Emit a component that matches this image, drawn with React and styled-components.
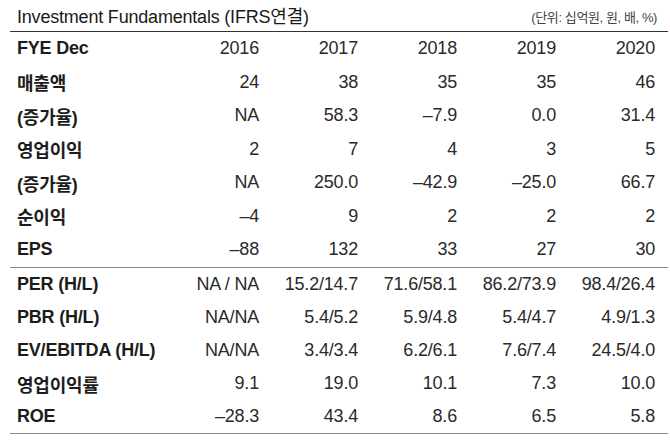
import styled, { createGlobalStyle } from "styled-components";

const GlobalStyle = createGlobalStyle`
  html, body {
    margin: 0;
    padding: 0;
    background: #ffffff;
  }
  body {
    font-family: "Liberation Sans", "Noto Sans CJK KR", sans-serif;
    color: #222;
  }
`;

const Page = styled.div`
  width: 670px;
  height: 446px;
  padding: 0 2px 0 10px;
  box-sizing: border-box;
`;

const TitleBar = styled.div`
  display: flex;
  justify-content: space-between;
  align-items: flex-end;
  height: 32px;
  padding: 0 11px 0 7px;
  box-sizing: border-box;
  border-bottom: 1.5px solid #333;
`;

const Title = styled.div`
  font-size: 18px;
  letter-spacing: -0.2px;
  color: #1a1a1a;
  padding-bottom: 3px;
`;

const Units = styled.div`
  font-size: 13px;
  color: #444;
  letter-spacing: -0.4px;
  padding-bottom: 5px;
`;

const Section = styled.div`
  border-bottom: 1px solid #8a8a8a;
`;

const Row = styled.div`
  display: grid;
  grid-template-columns: 163px repeat(5, 99px);
  height: ${(p) => p.h}px;
  align-items: center;
`;

const Label = styled.div`
  padding-left: 7px;
  font-size: 18px;
  font-weight: bold;
  color: #1c1c1c;
  letter-spacing: -0.2px;
  white-space: nowrap;
`;

const Cell = styled.div`
  text-align: right;
  padding-right: 13px;
  font-size: 18px;
  color: #2a2a2a;
  letter-spacing: -0.2px;
  white-space: nowrap;
`;

const top = [
  ["FYE Dec", "2016", "2017", "2018", "2019", "2020"],
  ["매출액", "24", "38", "35", "35", "46"],
  ["(증가율)", "NA", "58.3", "\u20137.9", "0.0", "31.4"],
  ["영업이익", "2", "7", "4", "3", "5"],
  ["(증가율)", "NA", "250.0", "\u201342.9", "\u201325.0", "66.7"],
  ["순이익", "\u20134", "9", "2", "2", "2"],
  ["EPS", "\u201388", "132", "33", "27", "30"],
];

const bottom = [
  ["PER (H/L)", "NA / NA", "15.2/14.7", "71.6/58.1", "86.2/73.9", "98.4/26.4"],
  ["PBR (H/L)", "NA/NA", "5.4/5.2", "5.9/4.8", "5.4/4.7", "4.9/1.3"],
  ["EV/EBITDA (H/L)", "NA/NA", "3.4/3.4", "6.2/6.1", "7.6/7.4", "24.5/4.0"],
  ["영업이익률", "9.1", "19.0", "10.1", "7.3", "10.0"],
  ["ROE", "\u201328.3", "43.4", "8.6", "6.5", "5.8"],
];

const TableRows = ({ rows, h }) =>
  rows.map((r, i) => (
    <Row key={i} h={h}>
      <Label>{r[0]}</Label>
      {r.slice(1).map((v, j) => (
        <Cell key={j}>{v}</Cell>
      ))}
    </Row>
  ));

export default function App() {
  return (
    <>
      <GlobalStyle />
      <Page>
        <TitleBar>
          <Title>Investment Fundamentals (IFRS연결)</Title>
          <Units>(단위: 십억원, 원, 배, %)</Units>
        </TitleBar>
        <Section>
          <TableRows rows={top} h={33.5} />
        </Section>
        <Section>
          <TableRows rows={bottom} h={33.2} />
        </Section>
      </Page>
    </>
  );
}
